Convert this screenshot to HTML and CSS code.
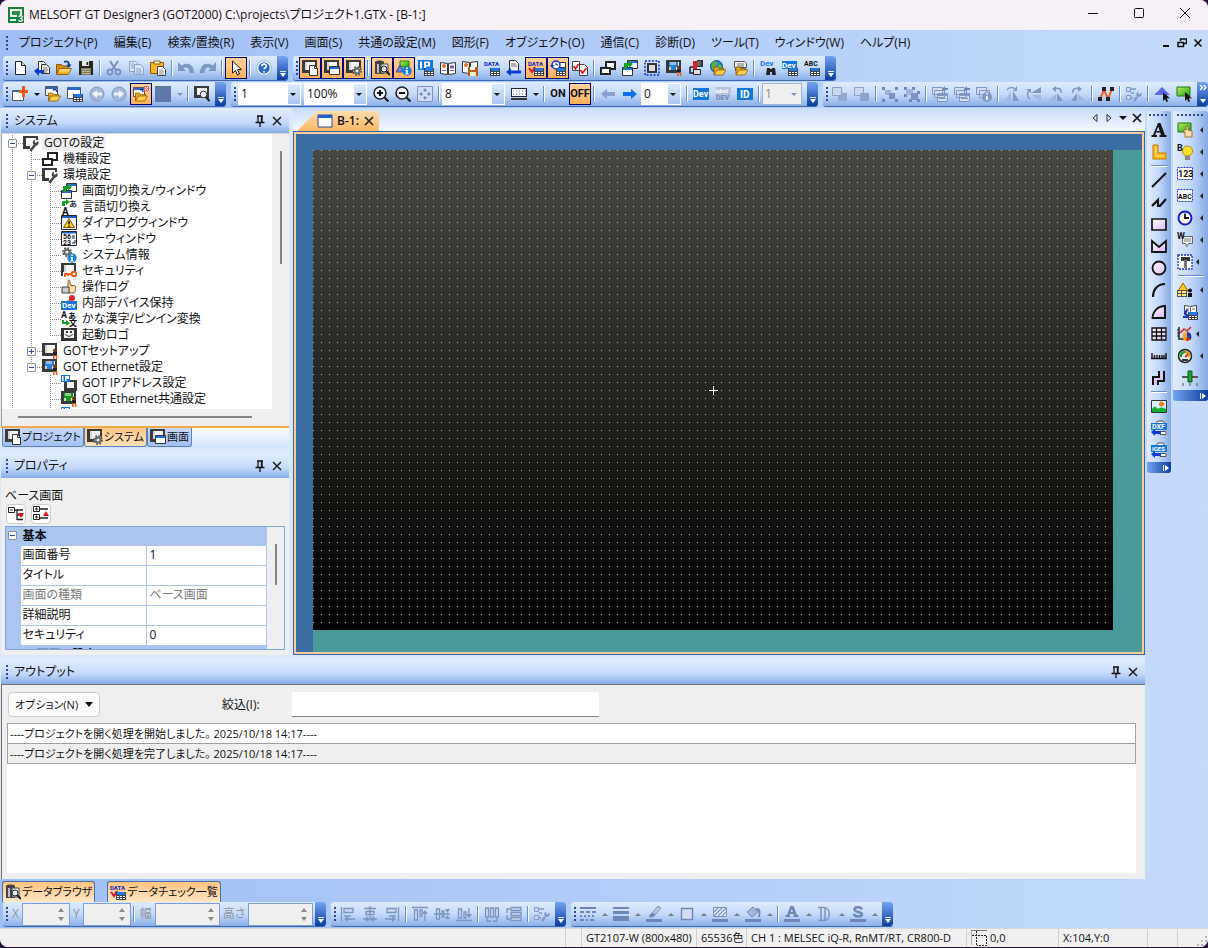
FILE: index.html
```html
<!DOCTYPE html>
<html lang="ja">
<head>
<meta charset="utf-8">
<title>MELSOFT GT Designer3</title>
<link rel="stylesheet" href="styles.css">
</head>
<body>
<svg class="defs" aria-hidden="true">
<defs>
<linearGradient id="g-lilac" x1="0" y1="0" x2="1" y2="1"><stop offset="0" stop-color="#fff"/><stop offset="1" stop-color="#d9b8f5"/></linearGradient>
<linearGradient id="g-gold" x1="0" y1="0" x2="0" y2="1"><stop offset="0" stop-color="#ffe98a"/><stop offset="1" stop-color="#f0a010"/></linearGradient>
<linearGradient id="g-green" x1="0" y1="0" x2="1" y2="1"><stop offset="0" stop-color="#b6f060"/><stop offset="1" stop-color="#1fa010"/></linearGradient>
<g id="p-table"><path d="M0 0h10v8H0z" fill="#444"/><path d="M1 0h8v3H1z" fill="#1f78e8"/><path d="M1 4h2v1H1zM4 4h2v1H4zM7 4h2v1H7zM1 6h2v1H1zM4 6h2v1H4zM7 6h2v1H7z" fill="#fff"/></g>
<g id="p-screen"><path d="M0 1h15v13H0z" fill="#3a3a3a"/><path d="M3 3h10v8H3z" fill="#f4f4f4"/><path d="M3 3h2v8H3z" fill="#d5d5d5"/></g>
<g id="p-win"><path d="M.5.5h10v8H.5z" fill="#fff" stroke="#333"/><path d="M1 1h9v2H1z" fill="#1f6fe0"/></g>
<g id="p-page"><path d="M.5.5h5l3 3v7h-8z" fill="#fff" stroke="#333"/><path d="M5.5.5v3h3" fill="none" stroke="#333"/></g>
<g id="p-gear"><circle cx="5" cy="5" r="3.800" fill="none" stroke="#555" stroke-width="2.200" stroke-dasharray="1.600 1.380"/><circle cx="5" cy="5" r="2.500" fill="none" stroke="#666" stroke-width="2"/></g>
<g id="p-info"><circle cx="5" cy="5" r="4.700" fill="#1b7fd6"/><path d="M4.200 1.500h1.700v1.500H4.200zM3.500 4h2.300v3.400h.9v1H3.400v-1h.8V5h-.7z" fill="#fff"/></g>
<g id="p-folder"><path d="M0 9V1h4l1 1.500h5V4" fill="#e9a51c" stroke="#7a5208" stroke-width=".7"/><path d="M0 9l3-5h9l-3 5z" fill="#ffcf4a" stroke="#7a5208" stroke-width=".7"/></g>
<g id="p-back"><path d="M0 4l5-4v3h5v3H5v3z" fill="#0b3bd0"/></g>
<g id="p-man"><path d="M1 4h4v3H1z" fill="#222"/><circle cx="3" cy="2.500" r="2" fill="#6b3a1a"/><path d="M1 7h1.500v4H1zM3.800 7h1.500v4H3.800z" fill="#f05a10"/></g>

<symbol id="app" viewBox="0 0 16 16"><path d="M0 0h16v16H0z" fill="#17803a"/><path d="M2 2h12v8H2z" fill="#e8f8e8"/><path d="M4 4h8v4H4z" fill="#2a8f4a"/><path d="M2 12h6v2H2z" fill="#cfe"/><path d="M9 8h7v8H9z" fill="#17803a"/><text x="10" y="15" class="t9" fill="#fff">3</text></symbol>
<symbol id="new" viewBox="0 0 16 16"><path d="M3.500 1.500h6l4 4v9h-10z" fill="#fff" stroke="#222"/><path d="M9.500 1.500v4h4" fill="#ddd" stroke="#222"/></symbol>
<symbol id="open-prev" viewBox="0 0 16 16"><path d="M4.500 1.500h5l2 2v8h-7z" fill="#fff" stroke="#333"/><path d="M7.500 4.500h5l3 3v6h-8z" fill="#eee" stroke="#333"/><path d="M9 8h4M9 10h5M9 12h4" stroke="#777"/><g transform="translate(0 7)"><use href="#p-back"/></g></symbol>
<symbol id="open" viewBox="0 0 16 16"><path d="M.5 14V4.500h5l1 1.500H12v3" fill="#d88d10" stroke="#8a5a08"/><path d="M.5 14.500l3-6h12l-3 6z" fill="url(#g-gold)" stroke="#9a6508"/><path d="M8 2c3-1.500 5 0 5 3" fill="none" stroke="#123a9c" stroke-width="1.800"/><path d="M10.500 4.500h5L13 8z" fill="#123a9c"/></symbol>
<symbol id="save" viewBox="0 0 16 16"><path d="M1 1h14v14H1z" fill="#26281a"/><path d="M4 1h7v5H4z" fill="#e8e8e8"/><path d="M8.500 2h1.700v3H8.500z" fill="#222"/><path d="M3 8h10v7H3z" fill="#777a58"/><path d="M4 9h8v1H4zM4 11h8v1H4zM4 13h8v1H4z" fill="#b8ba98"/></symbol>
<symbol id="cut" viewBox="0 0 16 16"><path d="M4 1l6 9M12 1l-6 9" stroke="#7a90bd" stroke-width="2"/><circle cx="4" cy="12" r="2.500" fill="none" stroke="#7a90bd" stroke-width="1.800"/><circle cx="12" cy="12" r="2.500" fill="none" stroke="#7a90bd" stroke-width="1.800"/></symbol>
<symbol id="copy" viewBox="0 0 16 16"><g fill="#d9e4f7" stroke="#8ba0ca"><path d="M1.500 1.500h6l2 2v8h-8z"/><path d="M6.500 4.500h6l3 3v7h-9z"/></g><path d="M8 9h5M8 11h6M8 13h6M3 4h3M3 6h3M3 8h3" stroke="#8ba0ca"/></symbol>
<symbol id="paste" viewBox="0 0 16 16"><path d="M.5 2.500h13v11H.5z" fill="#f7b52c" stroke="#8a5a08"/><path d="M4 1h6v3H4z" fill="#fff3b0" stroke="#7a5208" stroke-width=".8"/><path d="M7.500 6.500h5l3 3v6h-8z" fill="#fff" stroke="#444"/><path d="M9 10h4M9 12h5M9 14h5" stroke="#888"/></symbol>
<symbol id="undo" viewBox="0 0 16 16"><path d="M0 2v9h8L5.500 8.500c2-2 6-1 6 4.500h4.500C16 4 9 1.500 3.500 5.500z" fill="#8096c3"/></symbol>
<symbol id="cursor" viewBox="0 0 16 16"><path d="M4.500 1v12l3-2.500L9.500 15l2-1-2-4.300h4z" fill="#fff" stroke="#111"/></symbol>
<symbol id="help" viewBox="0 0 16 16"><circle cx="8" cy="8" r="6.500" fill="#2c69cf" stroke="#fff" stroke-width="1.500"/><circle cx="8" cy="8" r="7.300" fill="none" stroke="#8a9cc0" stroke-width=".7"/><path d="M5.700 6.300c.2-3 4.800-2.800 4.600 0-.1 1.400-2.100 1.500-2.200 3M8 11v1.700" stroke="#fff" stroke-width="1.600" fill="none"/></symbol>

<symbol id="scr-page" viewBox="0 0 16 16"><use href="#p-screen" y="-1"/><use href="#p-page" x="7" y="5"/></symbol>
<symbol id="scr-win" viewBox="0 0 16 16"><use href="#p-screen" y="-1"/><use href="#p-win" x="5" y="6"/></symbol>
<symbol id="scr-gear" viewBox="0 0 16 16"><use href="#p-screen" y="-1"/><circle cx="11" cy="11" r="4" fill="#eee"/><use href="#p-gear" x="6" y="6"/></symbol>
<symbol id="scr-wrench" viewBox="0 0 16 16"><path d="M0 1h15v4h-3v6H7v3H0z" fill="#3a3a3a"/><path d="M3 3h10v8H3z" fill="#f6f6f6"/><path d="M8 15l4-5" stroke="#444" stroke-width="2.500" stroke-linecap="round"/><path d="M15 6l-2 2-1.500-1 .7-2.200C9 5 9 10 12 10.500c3 .5 4.500-2 3-4.500z" fill="#444"/></symbol>
<symbol id="scr-man" viewBox="0 0 16 16"><use href="#p-screen" y="-1"/><use href="#p-man" x="10" y="5"/></symbol>
<symbol id="net-man" viewBox="0 0 16 16"><use href="#p-screen" y="-1"/><path d="M3 2h9v5h-2v3H5V7H3z" fill="#2c80d8"/><path d="M5 2v3M7 2v3M9 2v3" stroke="#fff"/><use href="#p-man" x="10" y="5"/></symbol>
<symbol id="net-man2" viewBox="0 0 16 16"><use href="#p-screen" y="-1"/><path d="M3 2h9v5h-2v3H5V7H3z" fill="#1a9a1a"/><path d="M5 2v3M7 2v3M9 2v3" stroke="#fff"/><use href="#p-man" x="10" y="5"/></symbol>
<symbol id="browser" viewBox="0 0 16 16"><path d="M1 2c0-2 9-2 9 0v12H1z" fill="#444"/><path d="M3 4h2v9H3z" fill="#bbb"/><path d="M7 4h7v9H7z" fill="#eee" stroke="#444"/><circle cx="10" cy="9" r="3" fill="#e7f0ff" stroke="#222"/><path d="M12 11l4 4" stroke="#222" stroke-width="2"/></symbol>
<symbol id="shape-info" viewBox="0 0 16 16"><path d="M4 1h9v6H4z" fill="url(#g-green)" stroke="#1f8010"/><path d="M4 5l4 7H0z" fill="#6a7fd8" stroke="#384a9a"/><use href="#p-info" x="6" y="6"/></symbol>
<symbol id="ip" viewBox="0 0 16 16"><path d="M0 0h15v10H0z" fill="#1577dc"/><path d="M2 1.500h2v7H2zM6 1.500h6v5H8v2H6z" fill="#fff"/><path d="M8 3h2v2H8z" fill="#1577dc"/><use href="#p-table" x="6" y="8"/></symbol>
<symbol id="book" viewBox="0 0 16 16"><path d="M.5 2.500l7 1v11l-7-1zM15.500 2.500l-7 1v11l7-1z" fill="#fff" stroke="#333"/><circle cx="4" cy="6" r="2" fill="#e07020"/><path d="M10 5.500h4v3h-4zM2 10h4v1H2zM10 10h4v1h-4z" fill="#8058d0"/></symbol>
<symbol id="book2" viewBox="0 0 16 16"><path d="M.5 1.500l7 1v11l-7-1zM15.500 1.500l-7 1v11l7-1z" fill="#fff" stroke="#333"/><circle cx="4" cy="5" r="2" fill="#e07020"/><path d="M6 7h10v9H6z" fill="#b85a18"/><path d="M8 7h5v3H8z" fill="#fff"/><path d="M8 12h6v4H8z" fill="#eec"/></symbol>
<symbol id="data" viewBox="0 0 16 16"><text x="0" y="6" class="t6" fill="#1420c0">DATA</text><use href="#p-table" x="6" y="8"/></symbol>
<symbol id="data-chk" viewBox="0 0 16 16"><text x="0" y="6" class="t6" fill="#1420c0">DATA</text><path d="M1 8l3 4 3-5" stroke="#e01030" stroke-width="2" fill="none"/><use href="#p-table" x="6" y="8"/></symbol>
<symbol id="doc-back" viewBox="0 0 16 16"><path d="M3.500.5h6l3 3v9h-9z" fill="#eee" stroke="#333"/><path d="M5 4h5M5 6h6" stroke="#777"/><path d="M0 12l5-4v2.500h10v3H5V16z" fill="#0b3bd0"/></symbol>
<symbol id="clock-tbl" viewBox="0 0 16 16"><path d="M7.500 2.500h8v5h-8z" fill="#fff" stroke="#333"/><circle cx="6" cy="5" r="4" fill="#fff" stroke="#1430c8" stroke-width="1.500"/><path d="M6 2.500V5h2" stroke="#1430c8" fill="none"/><path d="M0 5h4L2 8z" fill="#1430c8"/><use href="#p-table" x="6" y="8"/></symbol>
<symbol id="doc-chk" viewBox="0 0 16 16"><path d="M.5 1.500h7v9h-7zM7.500 4.500h5l3 3v8h-8z" fill="#fff" stroke="#444"/><path d="M1.500 6l2 3 3-5M8.500 10l2 3 4-5" stroke="#e01818" stroke-width="1.700" fill="none"/></symbol>
<symbol id="two-scr" viewBox="0 0 16 16"><path d="M6 2h9v7H6z" fill="#fff" stroke="#222" stroke-width="2"/><path d="M1 8h9v6H1z" fill="#fff" stroke="#222" stroke-width="2"/></symbol>
<symbol id="win-swap" viewBox="0 0 16 16"><use href="#p-win" x="5" y="0"/><use href="#p-win" x="0" y="7"/><path d="M2 9V3h5V0l4 4-4 4V6H5v3z" fill="#16a028"/></symbol>
<symbol id="sel-box" viewBox="0 0 16 16"><path d="M1 1h14v14H1z" fill="none" stroke="#1430c8" stroke-width="1.500" stroke-dasharray="2 1.500"/><path d="M3 3h10v10H3z" fill="#333"/><path d="M5 5h6v6H5z" fill="#ddd"/></symbol>
<symbol id="rack" viewBox="0 0 16 16"><path d="M5 1h4v8H5z" fill="#e02020"/><path d="M9 0h6v7H9z" fill="#333"/><path d="M10 1v5M12 1v5" stroke="#999"/><path d="M2 7h3M2 7v6h3" stroke="#222" stroke-width="1.500" fill="none"/><path d="M5.500 9.500h7v5h-7z" fill="#ddd" stroke="#222"/></symbol>
<symbol id="globe" viewBox="0 0 16 16"><circle cx="6.500" cy="6.500" r="6" fill="#2a80d8" stroke="#204a80"/><path d="M3 2c2-1 5 0 4 2S4 8 3 10C1 8 1 4 3 2zM8 5c2-1 4 0 4 2S9 9 8 8z" fill="#58b838"/><g transform="translate(4 6)"><use href="#p-folder"/></g></symbol>
<symbol id="talk" viewBox="0 0 16 16"><path d="M2.500 1.500h10l2 2v4h-8l-3 3V7.500h-1z" fill="#eee" stroke="#555"/><path d="M5 4h7M5 6h7" stroke="#777"/><g transform="translate(4 6)"><use href="#p-folder"/></g></symbol>
<symbol id="dev-find" viewBox="0 0 16 16"><text x="0" y="6" class="t8" fill="#1577dc">Dev</text><path d="M7 8h3v7H6zM12 8h3l1 7h-4zM10 9h2v3h-2z" fill="#222"/></symbol>
<symbol id="dev-tbl" viewBox="0 0 16 16"><path d="M0 1h15v8H0z" fill="#1577dc"/><text x="0" y="8" class="t8" fill="#fff">Dev</text><use href="#p-table" x="6" y="8"/></symbol>
<symbol id="abc-tbl" viewBox="0 0 16 16"><text x="0" y="6" class="t7" fill="#111">ABC</text><use href="#p-table" x="6" y="8"/></symbol>

<symbol id="win-new" viewBox="0 0 16 16"><path d="M.5 4.500h11v10H.5z" fill="#fff" stroke="#555"/><path d="M1 4h6v2H1z" fill="#2c68c8"/><path d="M10 0h3v4h3v3h-3v4h-3V7H7V4h3z" fill="#f05818"/></symbol>
<symbol id="win-open" viewBox="0 0 16 16"><path d="M.5.5h12v9H.5z" fill="#fff" stroke="#555"/><path d="M1 1h11v2H1z" fill="#2c68c8"/><path d="M8 4c2-1 4 0 4 2" stroke="#123a9c" stroke-width="1.500" fill="none"/><g transform="translate(3.500 6)"><use href="#p-folder"/></g></symbol>
<symbol id="win-tbl" viewBox="0 0 16 16"><path d="M.5 1.500h13v11H.5z" fill="#fff" stroke="#555"/><path d="M1 1h12v3H1z" fill="#2c68c8"/><use href="#p-table" x="6" y="8"/></symbol>
<symbol id="c-left" viewBox="0 0 16 16"><circle cx="8" cy="8" r="7" fill="#a6b8da" stroke="#8197c4"/><path d="M3 8l5-4v2.500h5v3H8V12z" fill="#eef3fc"/></symbol>
<symbol id="win-close" viewBox="0 0 16 16"><path d="M.5 1.500h11v9H.5z" fill="#fff" stroke="#555"/><path d="M1 2h10v2H1z" fill="#2c68c8"/><path d="M11 0h5v5h-5z" fill="#f06a6a"/><path d="M12 1l3 3M15 1l-3 3" stroke="#fff"/><path d="M7 4c2-1 3 0 3 2" stroke="#123a9c" stroke-width="1.500" fill="none"/><g transform="translate(2.500 6)"><use href="#p-folder"/></g></symbol>
<symbol id="swatch" viewBox="0 0 16 16"><path d="M0 0h16v16H0z" fill="#5f78ac"/></symbol>
<symbol id="scr-find" viewBox="0 0 16 16"><path d="M0 0h15v12H0z" fill="#3a3a3a"/><path d="M3 2h10v7H3z" fill="#f4f4f4"/><circle cx="9.500" cy="8.500" r="3.300" fill="#e7f0ff" stroke="#333"/><path d="M12 11l3.500 4" stroke="#222" stroke-width="2"/></symbol>
<symbol id="zoom-in" viewBox="0 0 16 16"><circle cx="7" cy="7" r="6" fill="#eef5ff" stroke="#222" stroke-width="1.500"/><path d="M11.500 11.500l4 4" stroke="#222" stroke-width="2.200"/><path d="M4 6h2V4h2v2h2v2H8v2H6V8H4z" fill="#111"/></symbol>
<symbol id="zoom-out" viewBox="0 0 16 16"><circle cx="7" cy="7" r="6" fill="#eef5ff" stroke="#222" stroke-width="1.500"/><path d="M11.500 11.500l4 4" stroke="#222" stroke-width="2.200"/><path d="M4 6h6v2H4z" fill="#111"/></symbol>
<symbol id="fit" viewBox="0 0 16 16"><path d="M.5.5h15v15H.5z" fill="#cfdcf4" stroke="#7f94c0"/><path d="M8 2l2 3H6zM8 14l2-3H6zM2 8l3-2v4zM14 8l-3-2v4z" fill="#7088b8"/><path d="M8 4v8M4 8h8" stroke="#7088b8" stroke-dasharray="2 4"/></symbol>
<symbol id="grid-dots" viewBox="0 0 16 16"><path d="M0 2h16v9H0z" fill="#223"/><path d="M1 3h14v7H1z" fill="#fff"/><path d="M2 5h13M2 8h13" stroke="#4468b0" stroke-dasharray="1 2"/><path d="M0 13h16" stroke="#333" stroke-width="2"/></symbol>
<symbol id="ar-l" viewBox="0 0 16 16"><path d="M1 8l6-5v3h8v4H7v3z" fill="#8ba0ca"/></symbol>
<symbol id="ar-r" viewBox="0 0 16 16"><path d="M15 8L9 3v3H1v4h8v3z" fill="#0d6ee8"/></symbol>
<symbol id="dev" viewBox="0 0 16 16"><path d="M0 2h16v12H0z" fill="#1577dc"/><text x="0" y="11" class="t9" fill="#fff">Dev</text></symbol>
<symbol id="label" viewBox="0 0 16 16"><path d="M0 1h16v14H0z" fill="#b4c4e2"/><text x="0" y="7" class="t6" fill="#fff">label</text><text x="1" y="14" class="t7" fill="#6f86b6">DEV</text></symbol>
<symbol id="id" viewBox="0 0 16 16"><path d="M0 2h16v12H0z" fill="#1577dc"/><text x="3" y="12" class="t10" fill="#fff">ID</text></symbol>

<symbol id="front" viewBox="0 0 16 16"><path d="M6 7h9v8H6z" fill="#93a7cf"/><path d="M.5 1.500h9v8h-9z" fill="#ccd8ee" stroke="#8ba0ca"/></symbol>
<symbol id="rear" viewBox="0 0 16 16"><path d="M.5 1.500h9v8h-9z" fill="#ccd8ee" stroke="#8ba0ca"/><path d="M6 7h9v8H6z" fill="#8ea3cc"/></symbol>
<symbol id="group" viewBox="0 0 16 16"><path d="M0 1h3v3H0zM13 1h3v3h-3zM0 13h3v3H0zM13 13h3v3h-3z" fill="#7088b8"/><path d="M3 4h6v5H3z" fill="#9fb1d6"/><path d="M7 7h6v6H7z" fill="#7d93c0"/></symbol>
<symbol id="ungroup" viewBox="0 0 16 16"><path d="M0 1h3v3H0zM8 1h3v3H8zM0 8h3v3H0zM13 5h3v3h-3zM5 13h3v3H5zM13 13h3v3h-3z" fill="#7088b8"/><path d="M2 3h7v6H2z" fill="#9fb1d6"/><path d="M7 7h7v7H7z" fill="#7d93c0"/></symbol>
<symbol id="stack" viewBox="0 0 16 16"><g fill="#d3def2" stroke="#8197c4"><path d="M.5 1.500h10v7H.5zM2.500 4.500h10v7h-10zM5.500 7.500h10v8h-10z"/></g><path d="M6 8h9v2H6zM7 12h7v1H7z" fill="#8197c4"/><path d="M10 3l3-3v2h3v2h-3v2z" fill="#7088b8"/></symbol>
<symbol id="stack-i" viewBox="0 0 16 16"><g fill="#d3def2" stroke="#8197c4"><path d="M.5 1.500h10v7H.5zM3.500 4.500h10v7h-10z"/></g><circle cx="11" cy="11" r="5" fill="#8197c4"/><path d="M10 7h2v1.500h-2zM10 10h2v4h-2z" fill="#e6eefb"/></symbol>
<symbol id="flip" viewBox="0 0 16 16"><path d="M7 5v10H1z" fill="#a6b8da"/><path d="M9 5v10h6z" fill="#8197c4"/><path d="M3 4c2-3 6-3 8-1" fill="none" stroke="#8197c4" stroke-width="1.500"/><path d="M13 0v5H9z" fill="#8197c4"/></symbol>
<symbol id="rot" viewBox="0 0 16 16"><path d="M0 15l8-7v7z" fill="#a6b8da"/><path d="M9 15V7l6 8z" fill="#8197c4"/><path d="M6 3c4-2 8 0 7 4" fill="none" stroke="#8197c4" stroke-width="1.500"/><path d="M8 0v6L4 3z" fill="#8197c4"/></symbol>
<symbol id="vertex" viewBox="0 0 16 16"><path d="M2 13L6 4l4 9 4-10" stroke="#f06020" stroke-width="2" fill="none"/><path d="M0 11h4v4H0zM4 1h4v4H4zM8 11h4v4H8zM12 1h4v4h-4z" fill="#222"/></symbol>
<symbol id="prop" viewBox="0 0 16 16"><path d="M.5 1.500h4v4h-4zM.5 9.500h4v4h-4z" fill="#ccd8ee" stroke="#8197c4"/><path d="M5 3h5M5 7h3M5 12h2" stroke="#8197c4" stroke-width="1.500"/><path d="M8 15l3-4" stroke="#8197c4" stroke-width="2.200"/><path d="M15.500 6.500l-2 2-1.500-1 .7-2C9.500 6 9.500 11 12.500 11c2.500 0 4-2 3-4.500z" fill="#8197c4"/></symbol>
<symbol id="pick1" viewBox="0 0 16 16"><path d="M8 1l8 8H0z" fill="#6068e8"/><path d="M9 6v9l2-2 1.500 3 1.500-.8-1.300-3H16z" fill="#111"/></symbol>
<symbol id="pick2" viewBox="0 0 16 16"><path d="M1 1h13v9H1z" fill="url(#g-green)" stroke="#187810"/><path d="M9 6v9l2-2 1.500 3 1.500-.8-1.300-3H16z" fill="#111"/></symbol>

<symbol id="big-a" viewBox="0 0 16 16"><path d="M7 1h2.500l4.500 12h1.500v2h-7v-2h1.500l-.8-2.500H5L4.200 13H6v2H.5v-2H2zM7.200 4.500L5.600 9h3.100z" fill="#161616"/></symbol>
<symbol id="ell" viewBox="0 0 16 16"><path d="M2 1h5v8h8v6H2z" fill="#ffb818" stroke="#c07800"/><path d="M4 3h1v9h8" stroke="#ffe9a0" fill="none"/></symbol>
<symbol id="line" viewBox="0 0 16 16"><path d="M1 15L15 1" stroke="#111" stroke-width="2"/></symbol>
<symbol id="zig" viewBox="0 0 16 16"><path d="M1 12l6-6v6h2l6-7" stroke="#111" stroke-width="2.200" fill="none"/></symbol>
<symbol id="rect" viewBox="0 0 16 16"><path d="M1 3h14v11H1z" fill="url(#g-lilac)" stroke="#111" stroke-width="1.700"/></symbol>
<symbol id="poly" viewBox="0 0 16 16"><path d="M1 14V3l7 6 7-6v11z" fill="url(#g-lilac)" stroke="#111" stroke-width="1.800"/></symbol>
<symbol id="circ" viewBox="0 0 16 16"><circle cx="8" cy="8" r="6.500" fill="url(#g-lilac)" stroke="#111" stroke-width="1.800"/></symbol>
<symbol id="arc" viewBox="0 0 16 16"><path d="M2 15C2 7 7 2 14 2" fill="none" stroke="#111" stroke-width="2.200"/></symbol>
<symbol id="sector" viewBox="0 0 16 16"><path d="M1.500 14C2 7 7 2 14 2v12z" fill="url(#g-lilac)" stroke="#111" stroke-width="1.900"/></symbol>
<symbol id="grid" viewBox="0 0 16 16"><path d="M1 2h14v12H1zM1 6h14M1 10h14M5.500 2v12M10.500 2v12" fill="url(#g-lilac)" stroke="#111" stroke-width="1.300"/></symbol>
<symbol id="ruler" viewBox="0 0 16 16"><path d="M0 10.500h16M1 5v5M3.500 7v3M6 7v3M8.500 7v3M11 7v3M13 7v3M15 5v5" stroke="#111" stroke-width="1.400"/></symbol>
<symbol id="pipe" viewBox="0 0 16 16"><path d="M8 1h6v9H8v5H2V8h6z" fill="#d9c8f5"/><path d="M2 15V7h6V1M7 15v-4h6V1" fill="none" stroke="#111" stroke-width="2"/></symbol>
<symbol id="image" viewBox="0 0 16 16"><path d="M.5 2.500h15v12H.5z" fill="#d4eeff" stroke="#333"/><circle cx="10.500" cy="6" r="2.500" fill="#f07820"/><path d="M1 11c3-4 4-2 6 0 2-2 5-2 8 0v3H1z" fill="#10b030"/></symbol>
<symbol id="dxf" viewBox="0 0 16 16"><path d="M5 3.500L7 1h5l2 3" fill="#fff" stroke="#555"/><path d="M0 3h16v7H0z" fill="#1577dc"/><text x="1" y="9" class="t7" fill="#fff">DXF</text><path d="M9 11.500h6v3H9z" fill="#fff" stroke="#555"/><path d="M0 12l4-3v2h6v3H4v2z" fill="#0b3bd0"/></symbol>
<symbol id="iges" viewBox="0 0 16 16"><path d="M5 3.500L7 1h5l2 3" fill="#fff" stroke="#555"/><path d="M0 3h16v7H0z" fill="#1577dc"/><text x="1" y="9" class="t6" fill="#fff">IGES</text><path d="M9 11.500h6v3H9z" fill="#fff" stroke="#555"/><path d="M0 12l4-3v2h6v3H4v2z" fill="#0b3bd0"/></symbol>

<symbol id="sw" viewBox="0 0 16 16"><path d="M1 1h13v9H1z" fill="url(#g-green)" stroke="#187810"/><path d="M8 15V10H6l1-2h2V4h2v4l4 1v6z" fill="#ffdba8" stroke="#8a5a28" stroke-width=".8"/></symbol>
<symbol id="lamp" viewBox="0 0 16 16"><circle cx="10.500" cy="7" r="5" fill="#ffe030" stroke="#b08800"/><path d="M8 12h5v4H8z" fill="#888"/><text x="0" y="7" class="t9" fill="#111">B</text></symbol>
<symbol id="num" viewBox="0 0 16 16"><path d="M.5 1.500h15v12H.5z" fill="#fff" stroke="#1430e8" stroke-dasharray="2 1"/><text x="1" y="11" class="t9" fill="#111">123</text></symbol>
<symbol id="txt" viewBox="0 0 16 16"><path d="M.5 1.500h15v12H.5z" fill="#fff" stroke="#1430e8" stroke-dasharray="2 1"/><text x="1" y="11" class="t7" fill="#111">ABC</text></symbol>
<symbol id="clock" viewBox="0 0 16 16"><circle cx="8" cy="8" r="6.500" fill="#fff" stroke="#1418d8" stroke-width="2"/><path d="M8 3.500V8h4" stroke="#111" stroke-width="1.800" fill="none"/></symbol>
<symbol id="cmt" viewBox="0 0 16 16"><path d="M5.500 4.500h10v7h-4l-2 3-1-3h-3z" fill="#eee" stroke="#666"/><path d="M7 7h7M7 9h7" stroke="#888"/><text x="0" y="7" class="t9" fill="#111">W</text></symbol>
<symbol id="tee" viewBox="0 0 16 16"><path d="M1 1h14v14H1z" fill="#fff" stroke="#1430e8" stroke-width="1.300" stroke-dasharray="2 1"/><path d="M4 3h9v4H4z" fill="#333"/><path d="M7 6h3v8H7z" fill="#777"/></symbol>
<symbol id="alarm" viewBox="0 0 16 16"><path d="M6 1l5 8H1z" fill="#ffc820" stroke="#a06800"/><path d="M0 8h10v7H0z" fill="#555"/><path d="M1 9h3v2H1zM5 9h4v2H5zM1 12h3v2H1zM5 12h4v2H5z" fill="#ffe070"/><circle cx="13" cy="8.500" r="2" fill="#111"/><path d="M11 11h4v4h-4z" fill="#111"/></symbol>
<symbol id="recipe" viewBox="0 0 16 16"><path d="M2.500 1.500l6 1 6-1v9l-6 1-6-1z" fill="#fff" stroke="#444"/><path d="M8.500 2v9M4 5h3M10 5h3M4 7h3" stroke="#777"/><path d="M5 5c-3 2-3 5-1 7H1v2h6V8L5 11c-1-2 0-4 1-5z" fill="#1430d0"/><use href="#p-table" x="6" y="8"/></symbol>
<symbol id="graph" viewBox="0 0 16 16"><path d="M2 1v12h12" stroke="#222" fill="none" stroke-width="1.500"/><path d="M0 4h2M0 7h2M0 10h2" stroke="#222"/><path d="M3 7l4-4 3 2 4-4" stroke="#e02010" stroke-width="1.500" fill="none"/><circle cx="10" cy="10.500" r="4.500" fill="#f8a818"/><path d="M10 10.500V6a4.500 4.500 0 0 1 3 7.800z" fill="#1438d0"/><path d="M10 10.500l3 3.300a4.500 4.500 0 0 1-4 1z" fill="#e02010"/></symbol>
<symbol id="meter" viewBox="0 0 16 16"><circle cx="8" cy="8" r="6.500" fill="#eee" stroke="#222" stroke-width="1.500"/><path d="M4 9a4 4 0 0 1 4-5" stroke="#18a028" stroke-width="2.500" fill="none"/><path d="M8 4a4 4 0 0 1 4 5" stroke="#e89018" stroke-width="2.500" fill="none"/><path d="M8 9l3-3" stroke="#c01010" stroke-width="1.500"/><path d="M5 11h6v2H5z" fill="#333"/></symbol>
<symbol id="slider" viewBox="0 0 16 16"><path d="M0 6h16v2H0z" fill="#555"/><path d="M6 1h4v11H6z" fill="#18a030" stroke="#0a5a18"/><path d="M1 13v3M8 13v3M15 13v3" stroke="#555"/></symbol>

<symbol id="lang" viewBox="0 0 16 16"><path d="M1 7V2h4V0l4 3-4 3V4H4v3z" fill="#16a028"/><text x="1" y="16" class="t10" fill="#111">A</text><text x="8" y="8" class="t8" fill="#333">あ</text></symbol>
<symbol id="dlg" viewBox="0 0 16 16"><path d="M.5.5h15v14H.5z" fill="#e8f0fc" stroke="#223"/><path d="M1 1h14v2H1z" fill="#1f5fd0"/><path d="M8 3.500l5.500 9h-11z" fill="#ffd020" stroke="#7a5a00"/><path d="M8 6v3.500M8 10.500V12" stroke="#111" stroke-width="1.500"/></symbol>
<symbol id="key" viewBox="0 0 16 16"><path d="M.5.5h15v14H.5z" fill="#fff" stroke="#223"/><path d="M1 1h14v1.500H1z" fill="#1f5fd0"/><text x="2" y="8" class="t7" fill="#111">56</text><text x="2" y="14" class="t7" fill="#111">23</text><path d="M11 5h3M11 7h3M14 9v3h-3" stroke="#111" fill="none"/></symbol>
<symbol id="gear-info" viewBox="0 0 16 16"><use href="#p-gear" x="1" y="0"/><use href="#p-info" x="6" y="6"/></symbol>
<symbol id="sec" viewBox="0 0 16 16"><use href="#p-screen" y="-1"/><path d="M2 9h14v5H2z" fill="#fff"/><circle cx="13" cy="11" r="2.300" fill="none" stroke="#f06018" stroke-width="2"/><path d="M3 11h8M4 11v3M7 11v2" stroke="#f06018" stroke-width="2"/></symbol>
<symbol id="op-log" viewBox="0 0 16 16"><path d="M7 10V2c0-1 2-1 2 0v4l5 1c1 0 1 6-1 7H8z" fill="#ffdba8" stroke="#8a5a28"/><path d="M1 8h7v6H1z" fill="#ccc" stroke="#444"/></symbol>
<symbol id="dev-keep" viewBox="0 0 16 16"><path d="M0 6h16v9H0z" fill="#1577dc"/><text x="1" y="13" class="t8" fill="#fff">Dev</text><path d="M6 7l4-3" stroke="#777" stroke-width="1.500"/><circle cx="11" cy="3" r="3" fill="#e82020"/></symbol>
<symbol id="kana" viewBox="0 0 16 16"><text x="0" y="7" class="t9" fill="#111">A</text><text x="7" y="8" class="t8" fill="#111">あ</text><text x="8" y="15" class="t8" fill="#111">文</text><path d="M1 9h2v2h2V9l4 3-4 3v-2H1z" fill="#16a028"/></symbol>
<symbol id="logo" viewBox="0 0 16 16"><path d="M0 1h16v13H0z" fill="#333"/><path d="M3 3h10v8H3z" fill="#f2f2f2"/><path d="M5 4h2v2H5zM9 4h2v2H9z" fill="#333"/><path d="M4.500 7c1 3 6 3 7 0" stroke="#333" fill="none"/></symbol>
<symbol id="ip-scr" viewBox="0 0 16 16"><path d="M3 5h13v11H3z" fill="#3a3a3a"/><path d="M6 7h7v6H6z" fill="#f4f4f4"/><path d="M0 0h9v7H0z" fill="#1577dc"/><path d="M1 1h1.500v5H1zM4 1h4v3H5.500v2H4z" fill="#fff"/></symbol>

<symbol id="exp-a" viewBox="0 0 16 16"><path d="M.5 1.500h6v5h-6zM2 4h3" fill="#fff" stroke="#222"/><path d="M7 4h8M9 4v10M9 9h6M9 13.500h6" stroke="#222" stroke-width="1.300" fill="none"/><path d="M10 7h6l-3 5z" fill="#f01010"/></symbol>
<symbol id="exp-b" viewBox="0 0 16 16"><path d="M.5.5h6v5h-6zM.5 8.500h6v5h-6zM2 3h3M3.500 1.500v3M2 11h3M3.500 9.500v3" fill="#fff" stroke="#222"/><path d="M7 3h8M7 12h8" stroke="#222" stroke-width="1.300"/><path d="M10 10h6l-3-5z" fill="#f01010"/></symbol>
<symbol id="pin" viewBox="0 0 12 12"><path d="M3 1h6M4 1v6M7.500 1v6M1.500 7.500h9M6 8v4M8 1v6" stroke="#111" stroke-width="1.300"/></symbol>
<symbol id="x" viewBox="0 0 12 12"><path d="M2 2l8 8M10 2l-8 8" stroke="#222" stroke-width="1.600"/></symbol>

<symbol id="al-l" viewBox="0 0 16 16"><path d="M1.500 1v14M4 2.500h9v4H4zM4 10h7M5 13h10" fill="#ccd8ee" stroke="#7d93c0" stroke-width="1.300"/><path d="M8 10v6l-4-3z" fill="#7d93c0"/></symbol>
<symbol id="al-c" viewBox="0 0 16 16"><path d="M8 0v15M2 2.500h12M4 5.500h8v3H4z" fill="#ccd8ee" stroke="#7d93c0" stroke-width="1.300"/><path d="M1 13h5M10 13h5" stroke="#7d93c0" stroke-width="1.500"/><path d="M4 10l4 3-4 3zM12 10l-4 3 4 3z" fill="#7d93c0"/></symbol>
<symbol id="al-r" viewBox="0 0 16 16"><path d="M14.500 1v14M3 2.500h9v4H3zM5 10h7M1 13h10" fill="#ccd8ee" stroke="#7d93c0" stroke-width="1.300"/><path d="M8 10v6l4-3z" fill="#7d93c0"/></symbol>
<symbol id="al-t" viewBox="0 0 16 16"><path d="M0 1.500h16M2.500 4h3v10h-3zM8 4h2v6H8zM13 6v9" fill="#ccd8ee" stroke="#7d93c0" stroke-width="1.300"/><path d="M10 8l3-4 3 4z" fill="#7d93c0"/></symbol>
<symbol id="al-m" viewBox="0 0 16 16"><path d="M0 8h16M2.500 3h3v10h-3zM8 5h2v6H8z" fill="#ccd8ee" stroke="#7d93c0" stroke-width="1.300"/><path d="M11 3h5l-2.500 4zM11 13h5l-2.500-4z" fill="#7d93c0"/></symbol>
<symbol id="al-b" viewBox="0 0 16 16"><path d="M0 14.500h16M2.500 3h3v9h-3zM8 6h2v6H8zM13 2v9" fill="#ccd8ee" stroke="#7d93c0" stroke-width="1.300"/><path d="M10 8l3 4 3-4z" fill="#7d93c0"/></symbol>
<symbol id="dist-h" viewBox="0 0 16 16"><path d="M1.500 2h3v9h-3zM6.500 2h3v9h-3zM11.500 2h3v9h-3z" fill="#ccd8ee" stroke="#7d93c0" stroke-width="1.300"/><path d="M3 12v3h4M9 15h4v-3" fill="none" stroke="#7d93c0" stroke-width="1.300"/></symbol>
<symbol id="dist-v" viewBox="0 0 16 16"><path d="M5 1.500h10v3H5zM5 6.500h10v3H5zM5 11.500h10v3H5z" fill="#ccd8ee" stroke="#7d93c0" stroke-width="1.300"/><path d="M4 3H1v4M1 9v4h3" fill="none" stroke="#7d93c0" stroke-width="1.300"/></symbol>
<symbol id="lstyle" viewBox="0 0 16 16"><path d="M0 2h16" stroke="#6f86b6" stroke-width="2"/><path d="M0 6h16" stroke="#6f86b6" stroke-width="2" stroke-dasharray="4 2"/><path d="M0 10h16" stroke="#6f86b6" stroke-width="2" stroke-dasharray="2 2"/><path d="M0 14h16" stroke="#6f86b6" stroke-width="2" stroke-dasharray="4 2 2 2"/></symbol>
<symbol id="lwidth" viewBox="0 0 16 16"><path d="M0 1h16v2H0zM0 5h16v3H0zM0 10h16v5H0z" fill="#6f86b6"/></symbol>
<symbol id="pen" viewBox="0 0 16 16"><path d="M0 13h16v3H0z" fill="#6f86b6"/><path d="M6 7l6-7 3 2-6 7z" fill="#b3c2e0" stroke="#7d93c0"/><path d="M3 11c0-3 2-4 4-4l2 2c-1 2-3 3-6 2z" fill="#6f86b6"/></symbol>
<symbol id="sq" viewBox="0 0 16 16"><path d="M2.500 2.500h11v11h-11z" fill="#d3def2" stroke="#6f86b6" stroke-width="1.400"/></symbol>
<symbol id="hatch" viewBox="0 0 16 16"><path d="M0 13h16v3H0z" fill="#6f86b6"/><path d="M1.500 1.500h13v9h-13z" fill="#e6eefb" stroke="#7d93c0"/><path d="M2 6l4-4M2 10l8-8M6 10l8-8M10 10l4-4" stroke="#8197c4" stroke-width="1.300"/></symbol>
<symbol id="bucket" viewBox="0 0 16 16"><path d="M0 13h16v3H0z" fill="#6f86b6"/><path d="M2 6l6-5 5 5-6 5z" fill="#a6b8da" stroke="#7088b8"/><path d="M11 3c4 0 4 3 3 8" stroke="#6f86b6" stroke-width="2" fill="none"/></symbol>
<symbol id="fa" viewBox="0 0 16 16"><path d="M0 13h16v3H0z" fill="#6f86b6"/><path d="M6.500 0h3L13 9h1.500v2h-5V9H10l-.4-1H6l-.5 1H6v2H1.500V9H3zM7.800 3L6.700 6h2.200z" fill="#6f86b6"/></symbol>
<symbol id="fd" viewBox="0 0 16 16"><path d="M1 1.500h6c7 0 7 13 0 13H1M4 1v13M8 1v13" fill="none" stroke="#7d93c0" stroke-width="1.500"/></symbol>
<symbol id="fs" viewBox="0 0 16 16"><path d="M0 13h16v3H0z" fill="#6f86b6"/><path d="M12 3.500C11 .5 4.500.5 4.500 3.500S12 5.500 12 8.300 5 11.500 3.800 8" fill="none" stroke="#6f86b6" stroke-width="2.400"/></symbol>
</defs>
</svg>

<div class="window">
<header class="titlebar">
  <svg class="ic"><use href="#app"/></svg>
  <h1>MELSOFT GT Designer3 (GOT2000) C:\projects\プロジェクト1.GTX - [B-1:]</h1>
  <div class="winctl">
    <button aria-label="最小化"><svg viewBox="0 0 12 12"><path d="M1 6.500h10" stroke="#111"/></svg></button>
    <button aria-label="最大化"><svg viewBox="0 0 12 12"><rect x="1.500" y="1.500" width="9" height="9" rx="1" fill="none" stroke="#111"/></svg></button>
    <button aria-label="閉じる"><svg viewBox="0 0 12 12"><path d="M1 1l10 10M11 1L1 11" stroke="#111"/></svg></button>
  </div>
</header>

<nav class="menubar"><i class="grip"></i>
  <button>プロジェクト(P)</button><button>編集(E)</button><button>検索/置換(R)</button><button>表示(V)</button><button>画面(S)</button><button>共通の設定(M)</button><button>図形(F)</button><button>オブジェクト(O)</button><button>通信(C)</button><button>診断(D)</button><button>ツール(T)</button><button>ウィンドウ(W)</button><button>ヘルプ(H)</button>
  <div class="mdictl">
    <button aria-label="最小化"><svg viewBox="0 0 10 10"><path d="M2 8h6" stroke="#111" stroke-width="2"/></svg></button>
    <button aria-label="元に戻す"><svg viewBox="0 0 10 10"><path d="M3.500 3V1h6v4.500H7M1 4.500h5.500v4H1z" fill="none" stroke="#111" stroke-width="1.500"/></svg></button>
    <button aria-label="閉じる"><svg viewBox="0 0 10 10"><path d="M1.500 1.500l7 7M8.500 1.500l-7 7" stroke="#111" stroke-width="1.600"/></svg></button>
  </div>
</nav>

<div class="toolrow">
  <div class="toolbar"><i class="grip"></i>
    <button class="tb" aria-label="新規"><svg class="ic"><use href="#new"/></svg></button>
    <button class="tb" aria-label="読出し"><svg class="ic"><use href="#open-prev"/></svg></button>
    <button class="tb" aria-label="開く"><svg class="ic"><use href="#open"/></svg></button>
    <button class="tb" aria-label="保存"><svg class="ic"><use href="#save"/></svg></button><i class="sep"></i>
    <button class="tb" aria-label="切り取り"><svg class="ic"><use href="#cut"/></svg></button>
    <button class="tb" aria-label="コピー"><svg class="ic"><use href="#copy"/></svg></button>
    <button class="tb" aria-label="貼り付け"><svg class="ic"><use href="#paste"/></svg></button><i class="sep"></i>
    <button class="tb" aria-label="元に戻す"><svg class="ic"><use href="#undo"/></svg></button>
    <button class="tb" aria-label="やり直し"><svg class="ic mirror"><use href="#undo"/></svg></button><i class="sep"></i>
    <button class="tb on" aria-label="選択"><svg class="ic"><use href="#cursor"/></svg></button><i class="sep"></i>
    <button class="tb" aria-label="ヘルプ"><svg class="ic"><use href="#help"/></svg></button>
    <button class="more" aria-label="その他"></button>
  </div>
  <div class="toolbar"><i class="grip"></i>
    <button class="tb on" aria-label="プロジェクト"><svg class="ic"><use href="#scr-page"/></svg></button>
    <button class="tb on" aria-label="画面一覧"><svg class="ic"><use href="#scr-win"/></svg></button>
    <button class="tb on" aria-label="システム"><svg class="ic"><use href="#scr-gear"/></svg></button><i class="sep"></i>
    <button class="tb on" aria-label="データブラウザ"><svg class="ic"><use href="#browser"/></svg></button>
    <button class="tb on" aria-label="プロパティ"><svg class="ic"><use href="#shape-info"/></svg></button>
    <button class="tb" aria-label="IP一覧"><svg class="ic"><use href="#ip"/></svg></button>
    <button class="tb" aria-label="ライブラリ"><svg class="ic"><use href="#book"/></svg></button>
    <button class="tb" aria-label="ライブラリ編集"><svg class="ic"><use href="#book2"/></svg></button>
    <button class="tb" aria-label="データ一覧"><svg class="ic"><use href="#data"/></svg></button>
    <button class="tb" aria-label="参照元"><svg class="ic"><use href="#doc-back"/></svg></button>
    <button class="tb on" aria-label="データチェック"><svg class="ic"><use href="#data-chk"/></svg></button>
    <button class="tb on" aria-label="アウトプット"><svg class="ic"><use href="#clock-tbl"/></svg></button>
    <button class="tb" aria-label="照合"><svg class="ic"><use href="#doc-chk"/></svg></button><i class="sep"></i>
    <button class="tb" aria-label="機種設定"><svg class="ic"><use href="#two-scr"/></svg></button>
    <button class="tb" aria-label="画面切り換え"><svg class="ic"><use href="#win-swap"/></svg></button>
    <button class="tb" aria-label="範囲"><svg class="ic"><use href="#sel-box"/></svg></button>
    <button class="tb" aria-label="通信設定"><svg class="ic"><use href="#net-man"/></svg></button>
    <button class="tb" aria-label="接続機器"><svg class="ic"><use href="#rack"/></svg></button>
    <button class="tb" aria-label="ネットワーク"><svg class="ic"><use href="#globe"/></svg></button>
    <button class="tb" aria-label="コメント"><svg class="ic"><use href="#talk"/></svg></button><i class="sep"></i>
    <button class="tb" aria-label="デバイス検索"><svg class="ic"><use href="#dev-find"/></svg></button>
    <button class="tb" aria-label="デバイス一覧"><svg class="ic"><use href="#dev-tbl"/></svg></button>
    <button class="tb" aria-label="文字列一覧"><svg class="ic"><use href="#abc-tbl"/></svg></button>
    <button class="more" aria-label="その他"></button>
  </div>
</div>

<div class="toolrow">
  <div class="toolbar"><i class="grip"></i>
    <button class="tb" aria-label="新規画面"><svg class="ic"><use href="#win-new"/></svg></button>
    <button class="dd" aria-label="新規画面の種類"></button>
    <button class="tb" aria-label="画面を開く"><svg class="ic"><use href="#win-open"/></svg></button>
    <button class="tb" aria-label="画面一覧"><svg class="ic"><use href="#win-tbl"/></svg></button>
    <button class="tb" aria-label="前の画面"><svg class="ic"><use href="#c-left"/></svg></button>
    <button class="tb" aria-label="次の画面"><svg class="ic mirror"><use href="#c-left"/></svg></button>
    <button class="tb on" aria-label="閉じて開く"><svg class="ic"><use href="#win-close"/></svg></button>
    <button class="tb" aria-label="背景色"><svg class="ic"><use href="#swatch"/></svg></button>
    <button class="dd off" aria-label="背景色の選択"></button><i class="sep"></i>
    <button class="tb" aria-label="プレビュー"><svg class="ic"><use href="#scr-find"/></svg></button>
    <button class="more" aria-label="その他"></button>
  </div>
  <div class="toolbar"><i class="grip"></i>
    <span class="combo w63"><select aria-label="画面番号"><option>1</option></select></span>
    <span class="combo w63"><select aria-label="ズーム"><option>100%</option></select></span>
    <button class="tb" aria-label="拡大"><svg class="ic"><use href="#zoom-in"/></svg></button>
    <button class="tb" aria-label="縮小"><svg class="ic"><use href="#zoom-out"/></svg></button>
    <button class="tb" aria-label="全体表示"><svg class="ic"><use href="#fit"/></svg></button><i class="sep"></i>
    <span class="combo w63"><select aria-label="グリッド間隔"><option>8</option></select></span>
    <button class="tb" aria-label="グリッド"><svg class="ic"><use href="#grid-dots"/></svg></button>
    <button class="dd" aria-label="グリッドの種類"></button><i class="sep"></i>
    <button class="tb word">ON</button>
    <button class="tb on word">OFF</button><i class="sep"></i>
    <button class="tb" aria-label="前へ"><svg class="ic"><use href="#ar-l"/></svg></button>
    <button class="tb" aria-label="次へ"><svg class="ic"><use href="#ar-r"/></svg></button>
    <span class="combo w40"><select aria-label="状態番号"><option>0</option></select></span><i class="sep"></i>
    <button class="tb" aria-label="デバイス表示"><svg class="ic"><use href="#dev"/></svg></button>
    <button class="tb" aria-label="ラベル表示"><svg class="ic"><use href="#label"/></svg></button>
    <button class="tb" aria-label="ID表示"><svg class="ic"><use href="#id"/></svg></button><i class="sep"></i>
    <span class="combo w40 off"><select aria-label="列番号" disabled><option>1</option></select></span>
    <button class="more" aria-label="その他"></button>
  </div>
  <div class="toolbar fill"><i class="grip"></i>
    <button class="tb" aria-label="前面へ"><svg class="ic"><use href="#front"/></svg></button>
    <button class="tb" aria-label="背面へ"><svg class="ic"><use href="#rear"/></svg></button><i class="sep"></i>
    <button class="tb" aria-label="グループ化"><svg class="ic"><use href="#group"/></svg></button>
    <button class="tb" aria-label="グループ解除"><svg class="ic"><use href="#ungroup"/></svg></button><i class="sep"></i>
    <button class="tb" aria-label="レイヤ前"><svg class="ic"><use href="#stack"/></svg></button>
    <button class="tb" aria-label="レイヤ後"><svg class="ic"><use href="#stack"/></svg></button>
    <button class="tb" aria-label="レイヤ情報"><svg class="ic"><use href="#stack-i"/></svg></button><i class="sep"></i>
    <button class="tb" aria-label="左右反転"><svg class="ic"><use href="#flip"/></svg></button>
    <button class="tb" aria-label="上下反転"><svg class="ic turn"><use href="#flip"/></svg></button>
    <button class="tb" aria-label="左回転"><svg class="ic"><use href="#rot"/></svg></button>
    <button class="tb" aria-label="右回転"><svg class="ic mirror"><use href="#rot"/></svg></button><i class="sep"></i>
    <button class="tb" aria-label="頂点編集"><svg class="ic"><use href="#vertex"/></svg></button><i class="sep"></i>
    <button class="tb" aria-label="一括変更"><svg class="ic"><use href="#prop"/></svg></button><i class="sep"></i>
    <button class="tb" aria-label="図形選択"><svg class="ic"><use href="#pick1"/></svg></button>
    <button class="tb" aria-label="オブジェクト選択"><svg class="ic"><use href="#pick2"/></svg></button>
    <button class="more chev" aria-label="その他"><svg viewBox="0 0 8 6"><path d="M1 0l2.500 2.500L1 5M4.500 0L7 2.500 4.500 5" fill="none" stroke="#fff" stroke-width="1.200"/></svg></button>
  </div>
</div>

<div class="work">
 <div class="main">
  <div class="upper">
   <aside class="side">
    <section class="panel sys">
      <header class="phead"><i class="grip"></i><h2>システム</h2><button aria-label="自動的に隠す"><svg><use href="#pin"/></svg></button><button aria-label="閉じる"><svg><use href="#x"/></svg></button></header>
      <div class="treebox">
       <div class="treeview">
        <ul class="tree">
         <li><div class="row"><span class="slot"><i class="pm minus"></i></span><svg class="ic"><use href="#scr-wrench"/></svg><span class="name sel">GOTの設定</span></div>
          <ul>
           <li><div class="row"><span class="slot"></span><svg class="ic"><use href="#two-scr"/></svg><span class="name">機種設定</span></div></li>
           <li><div class="row"><span class="slot"><i class="pm minus"></i></span><svg class="ic"><use href="#scr-wrench"/></svg><span class="name">環境設定</span></div>
            <ul>
             <li><div class="row"><span class="slot"></span><svg class="ic"><use href="#win-swap"/></svg><span class="name">画面切り換え/ウィンドウ</span></div></li>
             <li><div class="row"><span class="slot"></span><svg class="ic"><use href="#lang"/></svg><span class="name">言語切り換え</span></div></li>
             <li><div class="row"><span class="slot"></span><svg class="ic"><use href="#dlg"/></svg><span class="name">ダイアログウィンドウ</span></div></li>
             <li><div class="row"><span class="slot"></span><svg class="ic"><use href="#key"/></svg><span class="name">キーウィンドウ</span></div></li>
             <li><div class="row"><span class="slot"></span><svg class="ic"><use href="#gear-info"/></svg><span class="name">システム情報</span></div></li>
             <li><div class="row"><span class="slot"></span><svg class="ic"><use href="#sec"/></svg><span class="name">セキュリティ</span></div></li>
             <li><div class="row"><span class="slot"></span><svg class="ic"><use href="#op-log"/></svg><span class="name">操作ログ</span></div></li>
             <li><div class="row"><span class="slot"></span><svg class="ic"><use href="#dev-keep"/></svg><span class="name">内部デバイス保持</span></div></li>
             <li><div class="row"><span class="slot"></span><svg class="ic"><use href="#kana"/></svg><span class="name">かな漢字/ピンイン変換</span></div></li>
             <li><div class="row"><span class="slot"></span><svg class="ic"><use href="#logo"/></svg><span class="name">起動ロゴ</span></div></li>
            </ul></li>
           <li><div class="row"><span class="slot"><i class="pm plus"></i></span><svg class="ic"><use href="#scr-man"/></svg><span class="name">GOTセットアップ</span></div></li>
           <li><div class="row"><span class="slot"><i class="pm minus"></i></span><svg class="ic"><use href="#net-man"/></svg><span class="name">GOT Ethernet設定</span></div>
            <ul>
             <li><div class="row"><span class="slot"></span><svg class="ic"><use href="#ip-scr"/></svg><span class="name">GOT IPアドレス設定</span></div></li>
             <li><div class="row"><span class="slot"></span><svg class="ic"><use href="#net-man2"/></svg><span class="name">GOT Ethernet共通設定</span></div></li>
             <li><div class="row"><span class="slot"></span><svg class="ic"><use href="#ip-scr"/></svg></div></li>
            </ul></li>
          </ul></li>
        </ul>
       </div>
       <div class="vbar"><i class="tall"></i></div>
       <div class="hbar"><i></i></div>
      </div>
      <div class="tabs"><button><svg class="ic"><use href="#scr-page"/></svg>プロジェクト</button><button class="cur"><svg class="ic"><use href="#scr-gear"/></svg>システム</button><button><svg class="ic"><use href="#scr-win"/></svg>画面</button></div>
    </section>
    <section class="panel">
      <header class="phead"><i class="grip"></i><h2>プロパティ</h2><button aria-label="自動的に隠す"><svg><use href="#pin"/></svg></button><button aria-label="閉じる"><svg><use href="#x"/></svg></button></header>
      <div class="props">
        <p>ベース画面</p>
        <div class="pbtns"><button aria-label="すべて閉じる"><svg class="ic"><use href="#exp-a"/></svg></button><button aria-label="すべて開く"><svg class="ic"><use href="#exp-b"/></svg></button></div>
        <div class="pgrid">
         <table>
          <colgroup><col class="c0"><col class="c1"><col></colgroup>
          <tbody>
          <tr class="cat"><td><i class="pm minus"></i></td><th colspan="2">基本</th></tr>
          <tr><td></td><th>画面番号</th><td>1</td></tr>
          <tr><td></td><th>タイトル</th><td></td></tr>
          <tr class="ro"><td></td><th>画面の種類</th><td>ベース画面</td></tr>
          <tr><td></td><th>詳細説明</th><td></td></tr>
          <tr><td></td><th>セキュリティ</th><td>0</td></tr>
          <tr class="cat next"><td></td><th colspan="2">画面の設定</th></tr>
          </tbody>
         </table>
         <div class="vbar"><i></i></div>
        </div>
      </div>
    </section>
   </aside>

   <main class="editor">
    <div class="doctabs">
      <button class="doctab"><svg class="ic"><path d="M1 2h14v12H1z" fill="#fff" stroke="#2a4a9a"/><path d="M1 2h14v3H1z" fill="#1f5fd0"/></svg><b>B-1:</b><svg class="cx"><use href="#x"/></svg></button>
      <div class="docnav">
        <button aria-label="前のタブ"><svg viewBox="0 0 10 10"><path d="M7 1.500v7L3 5z" fill="none" stroke="#333"/></svg></button>
        <button aria-label="次のタブ"><svg viewBox="0 0 10 10"><path d="M3 1.500v7L7 5z" fill="none" stroke="#333"/></svg></button>
        <button aria-label="タブ一覧"><svg viewBox="0 0 10 10"><path d="M1 3h8L5 7z" fill="#111"/></svg></button>
        <button aria-label="閉じる"><svg viewBox="0 0 10 10"><path d="M1 1l8 8M9 1L1 9" stroke="#111" stroke-width="1.700"/></svg></button>
      </div>
    </div>
    <div class="frame"><div class="desk"><div class="screen"><svg viewBox="0 0 9 9"><path d="M4.500 0v9M0 4.500h9" stroke="#fff"/></svg></div></div></div>
   </main>
  </div>

  <section class="output">
   <header class="phead"><i class="grip"></i><h2>アウトプット</h2><button aria-label="自動的に隠す"><svg><use href="#pin"/></svg></button><button aria-label="閉じる"><svg><use href="#x"/></svg></button></header>
   <div class="outbody">
    <div class="filter"><button class="opt">オプション(N)</button><label for="flt">絞込(I):</label><input id="flt" type="text"></div>
    <div class="log"><table><tbody><tr><td>----プロジェクトを開く処理を開始しました。 2025/10/18 14:17----</td></tr><tr><td>----プロジェクトを開く処理を完了しました。 2025/10/18 14:17----</td></tr></tbody></table></div>
   </div>
  </section>
 </div>

 <div class="rail">
  <div class="vtool"><i class="hgrip"></i>
   <button class="tb" aria-label="文字"><svg class="ic"><use href="#big-a"/></svg></button>
   <button class="tb" aria-label="ロゴ文字"><svg class="ic"><use href="#ell"/></svg></button><i class="hsep"></i>
   <button class="tb" aria-label="直線"><svg class="ic"><use href="#line"/></svg></button>
   <button class="tb" aria-label="連続直線"><svg class="ic"><use href="#zig"/></svg></button>
   <button class="tb" aria-label="矩形"><svg class="ic"><use href="#rect"/></svg></button>
   <button class="tb" aria-label="多角形"><svg class="ic"><use href="#poly"/></svg></button>
   <button class="tb" aria-label="円"><svg class="ic"><use href="#circ"/></svg></button>
   <button class="tb" aria-label="円弧"><svg class="ic"><use href="#arc"/></svg></button>
   <button class="tb" aria-label="扇形"><svg class="ic"><use href="#sector"/></svg></button>
   <button class="tb" aria-label="表"><svg class="ic"><use href="#grid"/></svg></button>
   <button class="tb" aria-label="目盛"><svg class="ic"><use href="#ruler"/></svg></button>
   <button class="tb" aria-label="配管"><svg class="ic"><use href="#pipe"/></svg></button><i class="hsep"></i>
   <button class="tb" aria-label="画像"><svg class="ic"><use href="#image"/></svg></button>
   <button class="tb" aria-label="DXF読込み"><svg class="ic"><use href="#dxf"/></svg></button>
   <button class="tb" aria-label="IGES読込み"><svg class="ic"><use href="#iges"/></svg></button>
   <button class="vmore" aria-label="その他"></button>
  </div>
  <div class="vtool wide"><i class="hgrip"></i>
   <button class="tb fly" aria-label="スイッチ"><svg class="ic"><use href="#sw"/></svg></button>
   <button class="tb fly" aria-label="ランプ"><svg class="ic"><use href="#lamp"/></svg></button>
   <button class="tb fly" aria-label="数値表示"><svg class="ic"><use href="#num"/></svg></button>
   <button class="tb fly" aria-label="文字列表示"><svg class="ic"><use href="#txt"/></svg></button>
   <button class="tb fly" aria-label="時計"><svg class="ic"><use href="#clock"/></svg></button>
   <button class="tb fly" aria-label="コメント表示"><svg class="ic"><use href="#cmt"/></svg></button>
   <button class="tb fly near" aria-label="部品表示"><svg class="ic"><use href="#tee"/></svg></button><i class="hsep"></i>
   <button class="tb fly" aria-label="アラーム"><svg class="ic"><use href="#alarm"/></svg></button>
   <button class="tb solo" aria-label="レシピ"><svg class="ic"><use href="#recipe"/></svg></button>
   <button class="tb fly near" aria-label="グラフ"><svg class="ic"><use href="#graph"/></svg></button>
   <button class="tb fly" aria-label="メータ"><svg class="ic"><use href="#meter"/></svg></button>
   <button class="tb solo" aria-label="スライダ"><svg class="ic"><use href="#slider"/></svg></button>
   <button class="vmore" aria-label="その他"></button>
  </div>
 </div>
</div>

<div class="dock"><button><svg class="ic"><use href="#browser"/></svg>データブラウザ</button><button><svg class="ic"><use href="#data-chk"/></svg>データチェック一覧</button></div>

<div class="toolrow low">
  <div class="toolbar"><i class="grip"></i>
    <label class="coord">X<span class="spin"><input type="text" disabled></span></label>
    <label class="coord">Y<span class="spin"><input type="text" disabled></span></label><i class="sep"></i>
    <label class="coord">幅<span class="spin big"><input type="text" disabled></span></label>
    <label class="coord">高さ<span class="spin big"><input type="text" disabled></span></label>
    <button class="more" aria-label="その他"></button>
  </div>
  <div class="toolbar"><i class="grip"></i>
    <button class="tb" aria-label="左揃え"><svg class="ic"><use href="#al-l"/></svg></button>
    <button class="tb" aria-label="左右中央揃え"><svg class="ic"><use href="#al-c"/></svg></button>
    <button class="tb" aria-label="右揃え"><svg class="ic"><use href="#al-r"/></svg></button><i class="sep"></i>
    <button class="tb" aria-label="上揃え"><svg class="ic"><use href="#al-t"/></svg></button>
    <button class="tb" aria-label="上下中央揃え"><svg class="ic"><use href="#al-m"/></svg></button>
    <button class="tb" aria-label="下揃え"><svg class="ic"><use href="#al-b"/></svg></button><i class="sep"></i>
    <button class="tb" aria-label="横に等間隔"><svg class="ic"><use href="#dist-h"/></svg></button>
    <button class="tb" aria-label="縦に等間隔"><svg class="ic"><use href="#dist-v"/></svg></button><i class="sep"></i>
    <button class="tb" aria-label="整列設定"><svg class="ic"><use href="#prop"/></svg></button>
    <button class="more" aria-label="その他"></button>
  </div>
  <div class="toolbar"><i class="grip"></i>
    <button class="tb" aria-label="線種"><svg class="ic"><use href="#lstyle"/></svg></button><button class="dd up" aria-label="線種の選択"></button>
    <button class="tb" aria-label="線幅"><svg class="ic"><use href="#lwidth"/></svg></button><button class="dd up" aria-label="線幅の選択"></button>
    <button class="tb" aria-label="線色"><svg class="ic"><use href="#pen"/></svg></button><button class="dd up" aria-label="線色の選択"></button>
    <button class="tb" aria-label="枠"><svg class="ic"><use href="#sq"/></svg></button><button class="dd up" aria-label="枠の選択"></button>
    <button class="tb" aria-label="パターン"><svg class="ic"><use href="#hatch"/></svg></button><button class="dd up" aria-label="パターンの選択"></button>
    <button class="tb" aria-label="塗りつぶし"><svg class="ic"><use href="#bucket"/></svg></button><button class="dd up" aria-label="塗りつぶしの選択"></button><i class="sep"></i>
    <button class="tb" aria-label="文字色"><svg class="ic"><use href="#fa"/></svg></button><button class="dd up" aria-label="文字色の選択"></button>
    <button class="tb" aria-label="文字修飾"><svg class="ic"><use href="#fd"/></svg></button><button class="dd up" aria-label="文字修飾の選択"></button>
    <button class="tb" aria-label="影色"><svg class="ic"><use href="#fs"/></svg></button><button class="dd up" aria-label="影色の選択"></button>
    <button class="more" aria-label="その他"></button>
  </div>
</div>

<footer class="status">
  <span></span><span></span><span>GT2107-W (800x480)</span><span>65536色</span><span>CH 1 : MELSEC iQ-R, RnMT/RT, CR800-D</span>
  <span class="pos"><svg class="ic" viewBox="0 0 16 16"><path d="M0 15V.5h16" fill="none" stroke="#777"/><path d="M5.500 1v14M1 5.500h14M15.500 6v9.500H6" fill="none" stroke="#222" stroke-dasharray="2 1"/></svg>0,0</span>
  <span>X:104,Y:0</span><span></span>
  <svg class="size" viewBox="0 0 12 12"><path d="M9 1h2v2H9zM5 5h2v2H5zM9 5h2v2H9zM1 9h2v2H1zM5 9h2v2H5zM9 9h2v2H9z" fill="#b8b8b8"/></svg>
</footer>
</div>
</body>
</html>
```
FILE: styles.css
```css
* { box-sizing: border-box; }
html { height: 100%; background: #2a123f; }
body {
  margin: 0; height: 100%;
  font: 12px/16px "Open Sans", "Noto Sans CJK JP", sans-serif;
  font-feature-settings: "palt";
  color: #111;
}
button, input, select { font: inherit; font-feature-settings: inherit; color: inherit; margin: 0; }
button { border: 0; padding: 0; background: none; }
h1, h2, p, ul { margin: 0; padding: 0; font-size: 12px; font-weight: 400; }
ul { list-style: none; }
.defs { position: absolute; width: 0; height: 0; }
.ic { width: 16px; height: 16px; flex: none; display: block; }
.mirror { transform: scaleX(-1); }
.turn { transform: rotate(-90deg); }
.t6, .t7, .t8, .t9, .t10 { font-family: Roboto, "Noto Sans CJK JP", sans-serif; font-weight: 700; }
.t6 { font-size: 6px; } .t7 { font-size: 7px; } .t8 { font-size: 8px; } .t9 { font-size: 9px; } .t10 { font-size: 10px; }

.window {
  display: flex; flex-direction: column; height: calc(100vh - 1px); min-height: 640px;
  border-radius: 8px; overflow: hidden;
  background: linear-gradient(90deg, #9ebef5, #c5dafb);
}
.titlebar { display: flex; align-items: center; height: 30px; flex: none; padding-left: 8px; gap: 5px; background: #f7f0f7; }
.titlebar h1 { flex: 1; white-space: nowrap; }
.winctl button { width: 46px; height: 30px; }
.winctl { display: flex; }
.winctl svg { width: 12px; height: 12px; }

.menubar { display: flex; align-items: center; height: 26px; flex: none; padding-left: 6px; }
.menubar > button { padding: 0 8px; white-space: nowrap; }
.menubar .grip { margin-right: 3px; }
.mdictl { display: flex; gap: 6px; margin-left: auto; padding-right: 5px; }
.mdictl svg { width: 10px; height: 10px; display: block; }

.grip { width: 2px; height: 14px; flex: none; background: repeating-linear-gradient(#2c4a8c 0 2px, transparent 2px 4px); }
.toolrow { display: flex; gap: 5px; height: 26px; flex: none; padding-left: 3px; align-items: flex-start; }
.toolbar {
  display: flex; align-items: center; height: 25px; padding-left: 3px;
  background: linear-gradient(#deebfd, #c5dafa 50%, #8aafe8); border-bottom: 1px solid #3b69b4; border-radius: 3px;
}
.toolbar.fill { flex: 1; }
.toolbar.fill .more { margin-left: auto; }
.tb { width: 22px; height: 22px; flex: none; display: grid; place-items: center; }
.tb.on { border: 1px solid #000080; background: linear-gradient(#ffd29b, #ffb05a); }
.toolbar > .grip + .tb, .toolbar > .grip + .coord { margin-left: 1px; }
.word { font: 700 11px/16px Roboto, sans-serif; white-space: nowrap; }
.sep { width: 2px; height: 16px; flex: none; margin: 0 2px; background: linear-gradient(90deg, #6a8ccb 50%, #fff 50%); }
.more {
  width: 11px; margin-left: 2px; align-self: stretch; border-radius: 0 3px 3px 0; flex: none;
  background: linear-gradient(#74a4f2, #0b3d9c); display: flex; flex-direction: column; align-items: center; justify-content: flex-end; padding-bottom: 3px;
}
.more::before { content: ""; width: 6px; height: 1px; margin-bottom: 1px; background: #e4edfc; }
.more::after { content: ""; width: 0; border: 3px solid transparent; border-top: 4px solid #fff; border-bottom: 0; }
.chev::before { display: none; }
.chev { justify-content: space-between; padding-top: 3px; }
.chev svg { width: 8px; height: 6px; }
.dd { width: 11px; height: 22px; display: grid; place-items: center; flex: none; }
.dd::after, .combo::after { content: ""; border: 3px solid transparent; border-top-color: #111; border-bottom: 0; }
.dd.off::after { border-top-color: #7d93c0; }
.dd.up::after { border: 3px solid transparent; border-bottom-color: #7d7d7d; border-top: 0; }
.combo { position: relative; display: flex; height: 22px; margin-right: 3px; flex: none; background: #fff; border: 1px solid #fff; }
.combo::after { position: absolute; right: 4px; top: 9px; }
.combo select { appearance: none; border: 0; border-radius: 0; width: 100%; padding: 0 2px; background: linear-gradient(#dceafd, #a9c6f3) right / 12px 100% no-repeat #fff; opacity: 1; }
.grip + .combo { margin-left: 2px; }
.w63 { width: 63px; } .w40 { width: 40px; }
.combo.off { background: #efefef; border-color: #9db6de; color: #8a8a8a; }
.combo.off select { background: #efefef; }
.combo.off::after { border-top-color: #7d93c0; }

.work { flex: 1; display: flex; min-height: 0; }
.main { flex: 1; display: flex; flex-direction: column; min-width: 0; background: #dbe8fb; }
.upper { flex: 1; display: flex; gap: 4px; min-height: 0; }
.side { width: 289px; flex: none; display: flex; flex-direction: column; gap: 5px; padding-bottom: 2px; }
.panel { display: flex; flex-direction: column; padding-left: 1px; }
.sys { flex: 1; min-height: 0; }
.phead { display: flex; align-items: center; height: 25px; flex: none; padding: 0 4px 0 5px; background: linear-gradient(#e2eefe, #c3d9fa 60%, #86ade8); }
.phead h2 { flex: 1; padding-left: 6px; }
.phead button { width: 17px; height: 17px; display: grid; place-items: center; }
.phead svg, .cx { width: 12px; height: 12px; display: block; }
.treebox { flex: 1; min-height: 0; display: grid; grid-template: 1fr 17px / 1fr 17px; background: #efefef; border-left: 1px solid #a0a0a0; border-top: 1px solid #d8d8d8; }
.treeview { background: #fff; overflow: hidden; min-height: 0; }
.tree { padding: 1px 0 0 2px; }
.tree ul { padding-left: 19px; }
.tree li { background: repeating-linear-gradient(#888 0 1px, transparent 1px 2px) 8px 0 / 1px 100% no-repeat; }
.tree li li:last-child { background-size: 1px 8px; }
.tree li ul li ul li:nth-child(3):last-child { background-size: 1px 100%; }
.row { display: flex; align-items: center; height: 16px; }
.slot { width: 19px; height: 16px; flex: none; display: flex; align-items: center; padding-left: 4px; background: repeating-linear-gradient(90deg, #888 0 1px, transparent 1px 2px) 8px 8px / 11px 1px no-repeat; }
.pm { width: 9px; height: 9px; flex: none; border: 1px solid #919191; border-radius: 1px; display: block; }
.minus { background: linear-gradient(#2b4fa0, #2b4fa0) center / 5px 1px no-repeat #fff; }
.plus { background: linear-gradient(#2b4fa0, #2b4fa0) center / 5px 1px no-repeat, linear-gradient(#2b4fa0, #2b4fa0) center / 1px 5px no-repeat #fff; }
.name { white-space: nowrap; padding: 0 2px; margin-left: 3px; }
.sel { background: #efefef; }
.vbar { display: flex; justify-content: center; padding-top: 17px; background: #efefef; }
.vbar i { width: 2px; height: 41px; background: #858585; }
.vbar .tall { height: 113px; }
.hbar { padding: 7px 20px 0 16px; }
.hbar i { display: block; height: 2px; background: #858585; }
.tabs { display: flex; height: 22px; flex: none; padding-left: 1px; border-top: 2px solid #f0a94a; background: linear-gradient(#fff, #cfe1fb); }
.tabs button { display: flex; align-items: center; gap: 1px; padding: 0 2px; height: 19px; border: 1px solid #5b7fc0; border-top: 0; border-radius: 0 0 3px 3px; background: linear-gradient(#c6dafa, #a3c0f2); white-space: nowrap; font-size: 11px; }
.tabs .cur { background: linear-gradient(#ffc98a, #ffe0b8); }

.props { background: #efefef; padding: 10px 4px 5px; }
.pbtns { display: flex; gap: 5px; padding: 0 0 2px 1px; }
.pbtns button { width: 20px; height: 20px; background: #fdfdfd; border: 1px solid #ccc; border-radius: 4px; display: grid; place-items: center; }
.pgrid { display: flex; height: 124px; overflow: hidden; border: 1px solid #7da5e0; background: #efefef; }
.pgrid table { flex: 1; table-layout: fixed; border-collapse: collapse; width: 100%; }
.pgrid .vbar { width: 17px; flex: none; }
.c0 { width: 14px; } .c1 { width: 126px; }
.pgrid td, .pgrid th { height: 20px; padding: 0 3px; font-weight: 400; text-align: left; white-space: nowrap; line-height: 18px; border-bottom: 1px solid #a9c5f0; border-right: 1px solid #a9c5f0; background: #fff; }
.pgrid th { padding-left: 2px; }
.pgrid tr td:first-child { background: #a9c5f0; padding: 0 2px; }
.pgrid .cat td, .pgrid .cat th { background: #a9c5f0; font-weight: 700; height: 18px; line-height: 17px; }
.pgrid .next th { padding-left: 16px; }
.ro { color: #7a7a7a; }

.editor { flex: 1; min-width: 0; display: flex; flex-direction: column; }
.doctabs { height: 23px; flex: none; display: flex; justify-content: space-between; align-items: flex-end; padding-left: 4px; background: linear-gradient(#c9ddfa, #f3f8ff); }
.doctab { display: flex; align-items: center; gap: 4px; height: 20px; padding: 0 4px 0 20px; background: linear-gradient(#ffdcae, #ffb765); clip-path: polygon(20px 0, 100% 0, 100% 100%, 0 100%); }
.doctab b { font-weight: 600; }
.docnav { display: flex; gap: 4px; align-self: flex-start; padding: 5px 3px 0 0; }
.docnav svg { width: 10px; height: 10px; display: block; }
.frame { flex: 1; min-height: 0; display: flex; border: 1px solid #3566b0; box-shadow: inset 0 0 0 2px #f6cb97; padding: 2px; margin-bottom: 2px; }
.desk { flex: 1; min-width: 0; overflow: hidden; background: #4a9a9a; border-top: 16px solid #3b6da5; border-left: 17px solid #3b6da5; }
.screen {
  width: 800px; height: 480px; display: grid; place-items: center;
  background: conic-gradient(from 270deg at 1px 1px, #b8b8b4 90deg, transparent 0) 0 0 / 8px 8px, linear-gradient(#494840, #000);
}
.screen svg { width: 9px; height: 9px; }

.output { display: flex; flex-direction: column; padding: 2px 0 0 1px; }
.outbody { border-left: 1px solid #707070; border-top: 1px solid #707070; background: #efefef; padding: 7px 9px 6px 5px; }
.filter { display: flex; align-items: center; padding-left: 1px; }
.opt { width: 92px; height: 25px; border: 1px solid #ccc; border-radius: 4px; background: #fdfdfd; display: flex; align-items: center; justify-content: space-between; padding: 0 6px; white-space: nowrap; font-size: 11px; }
.opt::after { content: ""; border: 4px solid transparent; border-top: 5px solid #111; border-bottom: 0; }
.filter label { margin-left: 122px; width: 70px; }
.filter input { width: 307px; height: 25px; border: 0; border-bottom: 1px solid #868686; background: #fff; }
.log { margin-top: 6px; min-height: 150px; background: #fff; font-size: 11px; }
.log table { width: 100%; border-collapse: collapse; }
.log td { height: 20px; padding: 0 2px; line-height: 18px; border: 1px solid #a0a0a0; }
.log tr + tr td { background: #efefef; }

.rail { display: flex; gap: 2px; align-items: flex-start; padding: 3px 0 0 2px; }
.vtool { width: 24px; display: flex; flex-direction: column; align-items: center; padding-top: 3px; border-radius: 3px; background: linear-gradient(90deg, #e0ecfe, #c3d9fa 50%, #86aae4); }
.vtool.wide { width: 35px; }
.hgrip { width: 20px; height: 2px; margin-bottom: 3px; background: repeating-linear-gradient(90deg, #2c4a8c 0 2px, transparent 2px 4px); }
.wide .hgrip { width: 28px; }
.hsep { width: 16px; height: 2px; margin: 2px 0; background: linear-gradient(#6a8ccb 50%, #fff 50%); }
.wide .hsep { width: 26px; }
.vmore { align-self: stretch; height: 11px; margin-top: 1px; background: linear-gradient(90deg, #74a4f2, #0b3d9c); border-radius: 0 0 3px 3px; display: flex; align-items: center; justify-content: flex-end; gap: 1px; padding-right: 2px; }
.vmore::before { content: ""; width: 1px; height: 6px; background: #e4edfc; }
.vmore::after { content: ""; border: 3px solid transparent; border-left: 4px solid #fff; border-right: 0; }
.fly, .solo { width: 35px; display: flex; align-items: center; justify-content: flex-start; padding-left: 4px; }
.fly { justify-content: space-between; padding-right: 5px; }
.fly.near { padding-right: 9px; }
.solo { padding-left: 9px; }
.fly::after { content: ""; border: 3px solid transparent; border-right-color: #222; border-left: 0; }

.dock { display: flex; gap: 12px; height: 23px; flex: none; align-items: flex-end; padding-left: 2px; }
.dock button { display: flex; align-items: center; gap: 1px; height: 21px; padding: 0 2px; border: 1px solid #4a6cab; border-bottom: 0; border-radius: 3px 3px 0 0; background: linear-gradient(#ffc480, #ffe6c6); white-space: nowrap; font-size: 11px; }
.coord { display: flex; align-items: center; gap: 3px; padding-left: 3px; color: #8f969f; }
.spin { position: relative; display: flex; }
.spin input { width: 48px; height: 23px; border: 1px solid #7d9fd8; background: #efefef; }
.spin.big input { width: 65px; }
.spin::before, .spin::after { content: ""; position: absolute; right: 6px; border: 3px solid transparent; }
.spin::before { top: 5px; border-bottom: 4px solid #8a8a8a; border-top: 0; }
.spin::after { bottom: 5px; border-top: 4px solid #8a8a8a; border-bottom: 0; }

.status { display: flex; height: 19px; flex: none; align-items: center; background: #f0f0f0; border-top: 1px solid #d8d8d8; font-size: 11px; }
.status span { align-self: stretch; padding: 1px 4px 0; border-right: 1px solid #cfcfcf; white-space: nowrap; }
.status span:first-child { flex: 1; }
.status span:nth-child(2) { width: 16px; }
.status span:nth-child(3) { width: 115px; }
.status span:nth-child(4) { width: 50px; }
.status span:nth-child(5) { width: 220px; }
.status .pos { width: 92px; display: flex; gap: 3px; }
.status span:nth-child(7) { width: 89px; }
.status span:nth-child(8) { width: 30px; }
.size { width: 12px; height: 12px; margin: 4px 0 0 18px; align-self: flex-end; }
```
